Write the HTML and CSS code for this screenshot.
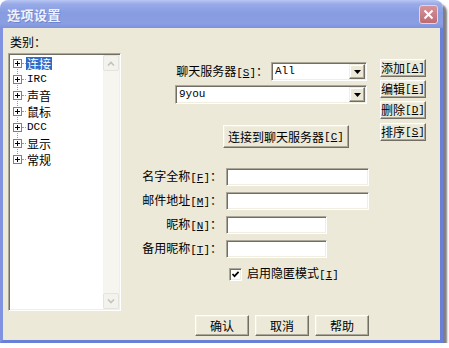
FILE: index.html
```html
<!DOCTYPE html>
<html>
<head>
<meta charset="utf-8">
<link rel="stylesheet" href="styles.css">
</head>
<body>
<div class="window">
  <div class="titlebar">
    <span class="title">选项设置</span>
    <span class="close"><svg width="11" height="11" viewBox="0 0 11 11"><path d="M1.5 1.5L9.5 9.5M9.5 1.5L1.5 9.5" stroke="#fff" stroke-width="2"/></svg></span>
  </div>
  <div class="client">
    <div class="left">
      <div class="cat-label">类别：</div>
      <div class="tree">
        <div class="nodes">
          <div class="node first"><span class="branch"><svg class="pbox" width="9" height="9" viewBox="0 0 9 9"><rect x=".5" y=".5" width="8" height="8" fill="#fff" stroke="#808080"/><path d="M2 4.5h5M4.5 2v5" stroke="#000"/></svg><span class="hl"></span></span><span class="lbl sel">连接</span></div>
          <div class="node"><span class="branch"><svg class="pbox" width="9" height="9" viewBox="0 0 9 9"><rect x=".5" y=".5" width="8" height="8" fill="#fff" stroke="#808080"/><path d="M2 4.5h5M4.5 2v5" stroke="#000"/></svg><span class="hl"></span></span><span class="lbl m">IRC</span></div>
          <div class="node"><span class="branch"><svg class="pbox" width="9" height="9" viewBox="0 0 9 9"><rect x=".5" y=".5" width="8" height="8" fill="#fff" stroke="#808080"/><path d="M2 4.5h5M4.5 2v5" stroke="#000"/></svg><span class="hl"></span></span><span class="lbl">声音</span></div>
          <div class="node"><span class="branch"><svg class="pbox" width="9" height="9" viewBox="0 0 9 9"><rect x=".5" y=".5" width="8" height="8" fill="#fff" stroke="#808080"/><path d="M2 4.5h5M4.5 2v5" stroke="#000"/></svg><span class="hl"></span></span><span class="lbl">鼠标</span></div>
          <div class="node"><span class="branch"><svg class="pbox" width="9" height="9" viewBox="0 0 9 9"><rect x=".5" y=".5" width="8" height="8" fill="#fff" stroke="#808080"/><path d="M2 4.5h5M4.5 2v5" stroke="#000"/></svg><span class="hl"></span></span><span class="lbl m">DCC</span></div>
          <div class="node"><span class="branch"><svg class="pbox" width="9" height="9" viewBox="0 0 9 9"><rect x=".5" y=".5" width="8" height="8" fill="#fff" stroke="#808080"/><path d="M2 4.5h5M4.5 2v5" stroke="#000"/></svg><span class="hl"></span></span><span class="lbl">显示</span></div>
          <div class="node last"><span class="branch"><svg class="pbox" width="9" height="9" viewBox="0 0 9 9"><rect x=".5" y=".5" width="8" height="8" fill="#fff" stroke="#808080"/><path d="M2 4.5h5M4.5 2v5" stroke="#000"/></svg><span class="hl"></span></span><span class="lbl">常规</span></div>
        </div>
        <div class="vscroll">
          <div class="sbtn"><svg width="8" height="5" viewBox="0 0 8 5"><path d="M1 4.5L4 1.5L7 4.5" fill="none" stroke="#c4c3bb" stroke-width="1.6"/></svg></div>
          <div class="track"></div>
          <div class="sbtn"><svg width="8" height="5" viewBox="0 0 8 5"><path d="M1 0.5L4 3.5L7 0.5" fill="none" stroke="#c4c3bb" stroke-width="1.6"/></svg></div>
        </div>
      </div>
    </div>
    <div class="right">
      <div class="top">
        <div class="srv">
          <div class="row1">
            <span class="flabel">聊天服务器<span class="m">[<u>S</u>]</span>：</span>
            <div class="combo c1"><span class="val m">All</span><span class="drop"><svg width="7" height="4" viewBox="0 0 7 4"><path d="M0 0h7L3.5 4z" fill="#000"/></svg></span></div>
          </div>
          <div class="combo c2"><span class="val m">9you</span><span class="drop"><svg width="7" height="4" viewBox="0 0 7 4"><path d="M0 0h7L3.5 4z" fill="#000"/></svg></span></div>
          <button class="btn connect">连接到聊天服务器<span class="m">[<u>C</u>]</span></button>
        </div>
        <div class="side">
          <button class="btn sb">添加<span class="m">[<u>A</u>]</span></button>
          <button class="btn sb">编辑<span class="m">[<u>E</u>]</span></button>
          <button class="btn sb">删除<span class="m">[<u>D</u>]</span></button>
          <button class="btn sb gap">排序<span class="m">[<u>S</u>]</span></button>
        </div>
      </div>
      <div class="fields">
        <span class="flabel">名字全称<span class="m">[<u>F</u>]</span>：</span>
        <input class="tx wide" type="text">
        <span class="flabel">邮件地址<span class="m">[<u>M</u>]</span>：</span>
        <input class="tx wide" type="text">
        <span class="flabel">昵称<span class="m">[<u>N</u>]</span>：</span>
        <input class="tx short" type="text">
        <span class="flabel">备用昵称<span class="m">[<u>T</u>]</span>：</span>
        <input class="tx short" type="text">
      </div>
      <div class="chk">
        <span class="cb"><svg width="9" height="9" viewBox="0 0 9 9"><path d="M1.5 4L3.5 6.2L7.6 1.8" fill="none" stroke="#000" stroke-width="1.7"/></svg></span>
        <span class="chk-text">启用隐匿模式<span class="m">[<u>I</u>]</span></span>
      </div>
      <div class="actions">
        <button class="btn act">确认</button>
        <button class="btn act">取消</button>
        <button class="btn act">帮助</button>
      </div>
    </div>
  </div>
</div>
</body>
</html>
```

FILE: styles.css
```css
* { box-sizing: border-box; }
html, body { margin: 0; padding: 0; background: #fff; }
body {
  font-family: "Noto Sans CJK SC", "Liberation Sans", sans-serif;
  font-size: 12px;
  line-height: 14px;
  color: #000;
}
.m {
  font-family: "Liberation Mono", "Noto Sans CJK SC", monospace;
  font-size: 11px;
}
u { text-decoration: underline; text-underline-offset: 1px; }

.window {
  width: 443px;
  height: 343px;
  display: flex;
  flex-direction: column;
  border-radius: 8px 8px 0 0;
  box-shadow: 4px 4px 2px rgba(0, 0, 0, 0.5);
}
.titlebar {
  flex: none;
  height: 28px;
  border-radius: 8px 8px 0 0;
  background: linear-gradient(to bottom, #b7c6f3 0, #98abe8 4px, #889ce1 45%, #8a9ee2 85%, #7e92dc 100%);
  display: flex;
  align-items: center;
  padding: 2px 5px 0 7px;
}
.title {
  color: #eef2fc;
  font-weight: bold;
  font-size: 13px;
  line-height: 16px;
  letter-spacing: 0.5px;
  text-shadow: 1px 1px 0 rgba(60, 80, 160, 0.35);
}
.close {
  margin-left: auto;
  margin-top: -1px;
  width: 19px;
  height: 19px;
  border: 1px solid #ecd2d4;
  border-radius: 3px;
  background: linear-gradient(#d6939a, #bd6b73);
  display: flex;
  align-items: center;
  justify-content: center;
}
.client {
  flex: 1;
  display: flex;
  background: #ece9d8;
  border: 3px solid;
  border-top: 0;
  border-color: #8193e0 #6a7fd8 #6a7fd8 #8193e0;
}

/* left column */
.left {
  width: 118px;
  flex: none;
  padding-left: 5px;
}
.cat-label {
  margin-top: 7px;
  margin-bottom: 4px;
  height: 14px;
  padding-left: 2px;
}
.tree {
  width: 113px;
  height: 258px;
  display: flex;
  padding: 1px;
  border: 1px solid;
  border-color: #aca899 #fff #fff #aca899;
  box-shadow: inset 1px 1px 0 #716f64, inset -1px -1px 0 #f1efe2;
}
.nodes {
  flex: 1;
  background: #fff;
}
.node {
  height: 16px;
  display: flex;
  align-items: center;
}
.branch {
  width: 16px;
  height: 16px;
  flex: none;
  display: flex;
  align-items: center;
  padding-left: 3px;
  background: linear-gradient(to bottom, #9a9a9a 1px, transparent 1px) 7px 0 / 1px 2px repeat-y;
}
.node.first .branch {
  background:
    linear-gradient(#fff, #fff) 0 0 / 100% 8px no-repeat,
    linear-gradient(to bottom, #9a9a9a 1px, transparent 1px) 7px 0 / 1px 2px repeat-y;
}
.node.last .branch {
  background:
    linear-gradient(#fff, #fff) 0 8px / 100% 8px no-repeat,
    linear-gradient(to bottom, #9a9a9a 1px, transparent 1px) 7px 0 / 1px 2px repeat-y;
}
.pbox { display: block; flex: none; }
.hl {
  width: 4px;
  height: 0;
  border-top: 1px dotted #9a9a9a;
}
.lbl {
  padding: 0 1px;
  line-height: 13px;
  height: 13px;
  white-space: nowrap;
}
.lbl.m { font-size: 11px; }
.lbl.sel {
  background: #316ac5;
  color: #fff;
}
.vscroll {
  width: 16px;
  flex: none;
  display: flex;
  flex-direction: column;
  background: #f6f5f0;
}
.sbtn {
  height: 16px;
  flex: none;
  background: #f3f2ec;
  border: 1px solid #e4e3dc;
  border-radius: 2px;
  display: flex;
  align-items: center;
  justify-content: center;
}
.track { flex: 1; }

/* right area */
.right {
  flex: 1;
  display: flex;
  flex-direction: column;
}
.top {
  display: flex;
  gap: 13px;
}
.srv {
  width: 246px;
  display: flex;
  flex-direction: column;
  align-items: flex-start;
}
.row1 {
  margin-top: 34px;
  width: 246px;
  display: flex;
  align-items: center;
  justify-content: flex-end;
  gap: 3px;
}
.flabel { white-space: nowrap; }
.combo {
  height: 19px;
  display: flex;
  padding: 1px;
  border: 1px solid;
  border-color: #aca899 #fff #fff #aca899;
  box-shadow: inset 1px 1px 0 #716f64, inset -1px -1px 0 #f1efe2;
  background: #fff;
}
.c1 { width: 96px; }
.c2 { width: 192px; margin-top: 4px; margin-left: 54px; }
.val {
  flex: 1;
  padding-left: 2px;
  line-height: 15px;
}
.drop {
  width: 16px;
  height: 15px;
  flex: none;
  background: #ece9d8;
  border: 1px solid;
  border-color: #f1efe2 #716f64 #716f64 #f1efe2;
  box-shadow: inset -1px -1px 0 #aca899, inset 1px 1px 0 #fff;
  display: flex;
  align-items: center;
  justify-content: center;
}
.btn {
  font: inherit;
  font-size: 12px;
  line-height: 14px;
  padding: 0;
  margin: 0;
  color: #000;
  background: #ece9d8;
  border: 1px solid;
  border-color: #fff #716f64 #716f64 #fff;
  box-shadow: inset -1px -1px 0 #aca899, inset 1px 1px 0 #f1efe2;
  display: flex;
  align-items: center;
  justify-content: center;
  white-space: nowrap;
}
.connect {
  margin-top: 21px;
  margin-left: 102px;
  width: 126px;
  height: 23px;
}
.side {
  width: 46px;
  margin-top: 31px;
  display: flex;
  flex-direction: column;
  gap: 3px;
}
.sb { width: 46px; height: 18px; }
.sb.gap { margin-top: 1px; }

.fields {
  margin-top: 20px;
  display: grid;
  grid-template-columns: 101px auto;
  column-gap: 4px;
  row-gap: 6px;
  align-items: center;
  justify-items: start;
}
.fields .flabel { justify-self: end; }
.tx {
  height: 18px;
  margin: 0;
  padding: 0;
  border: 1px solid;
  border-color: #aca899 #fff #fff #aca899;
  box-shadow: inset 1px 1px 0 #716f64, inset -1px -1px 0 #f1efe2;
  background: #fff;
  outline: none;
}
.wide { width: 143px; }
.short { width: 101px; }

.chk {
  margin-top: 8px;
  margin-left: 108px;
  display: flex;
  align-items: center;
  gap: 5px;
}
.cb {
  width: 13px;
  height: 13px;
  padding: 1px;
  border: 1px solid;
  border-color: #aca899 #fff #fff #aca899;
  box-shadow: inset 1px 1px 0 #716f64, inset -1px -1px 0 #f1efe2;
  background: #fff;
  display: flex;
  align-items: center;
  justify-content: center;
}
.cb svg { display: block; }
.actions {
  margin-top: 33px;
  margin-left: 74px;
  display: flex;
  gap: 6px;
}
.act { width: 54px; height: 21px; }
```
